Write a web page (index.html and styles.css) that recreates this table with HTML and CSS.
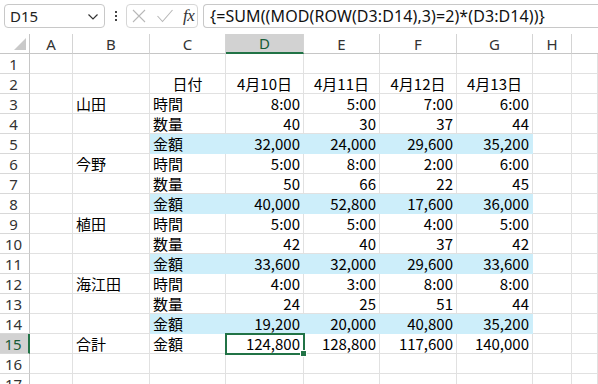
FILE: index.html
```html
<!DOCTYPE html>
<html lang="ja">
<head>
<meta charset="utf-8">
<link rel="stylesheet" href="styles.css">
</head>
<body>
<div class="fbar">
  <div class="namebox"><span>D15</span>
    <svg class="chev" width="12" height="8" viewBox="0 0 12 8"><path d="M1.5 1.5 L6 6 L10.5 1.5" fill="none" stroke="#333" stroke-width="1.2"/></svg>
  </div>
  <div class="dots"><i></i><i></i><i></i></div>
  <div class="fxbox">
    <svg width="16" height="16" viewBox="0 0 16 16"><path d="M2 2 L14 14 M14 2 L2 14" stroke="#b8b8b8" stroke-width="1.1" fill="none"/></svg>
    <svg width="18" height="16" viewBox="0 0 18 16"><path d="M1.5 8 L6.5 13.5 L16.5 2" stroke="#b8b8b8" stroke-width="1.1" fill="none"/></svg>
    <span class="fx">fx</span>
  </div>
  <div class="formula">{=SUM((MOD(ROW(D3:D14),3)=2)*(D3:D14))}</div>
</div>
<div class="sheet">
  <div class="corner"><span class="tri"></span></div>
  <div class="ch">A</div><div class="ch">B</div><div class="ch">C</div><div class="ch sel">D</div><div class="ch">E</div><div class="ch">F</div><div class="ch">G</div><div class="ch">H</div><div class="ch last"></div>

  <div class="rh">1</div><div class="c"></div><div class="c"></div><div class="c"></div><div class="c"></div><div class="c"></div><div class="c"></div><div class="c"></div><div class="c"></div><div class="c"></div>

  <div class="rh">2</div><div class="c"></div><div class="c"></div><div class="c ctr">日付</div><div class="c ctr">4月10日</div><div class="c ctr">4月11日</div><div class="c ctr">4月12日</div><div class="c ctr">4月13日</div><div class="c"></div><div class="c"></div>

  <div class="rh">3</div><div class="c"></div><div class="c">山田</div><div class="c">時間</div><div class="c r">8:00</div><div class="c r">5:00</div><div class="c r">7:00</div><div class="c r">6:00</div><div class="c"></div><div class="c"></div>
  <div class="rh">4</div><div class="c"></div><div class="c"></div><div class="c">数量</div><div class="c r">40</div><div class="c r">30</div><div class="c r">37</div><div class="c r">44</div><div class="c"></div><div class="c"></div>
  <div class="rh">5</div><div class="c"></div><div class="c"></div><div class="c b">金額</div><div class="c r b">32,000</div><div class="c r b">24,000</div><div class="c r b">29,600</div><div class="c r b">35,200</div><div class="c"></div><div class="c"></div>

  <div class="rh">6</div><div class="c"></div><div class="c">今野</div><div class="c">時間</div><div class="c r">5:00</div><div class="c r">8:00</div><div class="c r">2:00</div><div class="c r">6:00</div><div class="c"></div><div class="c"></div>
  <div class="rh">7</div><div class="c"></div><div class="c"></div><div class="c">数量</div><div class="c r">50</div><div class="c r">66</div><div class="c r">22</div><div class="c r">45</div><div class="c"></div><div class="c"></div>
  <div class="rh">8</div><div class="c"></div><div class="c"></div><div class="c b">金額</div><div class="c r b">40,000</div><div class="c r b">52,800</div><div class="c r b">17,600</div><div class="c r b">36,000</div><div class="c"></div><div class="c"></div>

  <div class="rh">9</div><div class="c"></div><div class="c">植田</div><div class="c">時間</div><div class="c r">5:00</div><div class="c r">5:00</div><div class="c r">4:00</div><div class="c r">5:00</div><div class="c"></div><div class="c"></div>
  <div class="rh">10</div><div class="c"></div><div class="c"></div><div class="c">数量</div><div class="c r">42</div><div class="c r">40</div><div class="c r">37</div><div class="c r">42</div><div class="c"></div><div class="c"></div>
  <div class="rh">11</div><div class="c"></div><div class="c"></div><div class="c b">金額</div><div class="c r b">33,600</div><div class="c r b">32,000</div><div class="c r b">29,600</div><div class="c r b">33,600</div><div class="c"></div><div class="c"></div>

  <div class="rh">12</div><div class="c"></div><div class="c">海江田</div><div class="c">時間</div><div class="c r">4:00</div><div class="c r">3:00</div><div class="c r">8:00</div><div class="c r">8:00</div><div class="c"></div><div class="c"></div>
  <div class="rh">13</div><div class="c"></div><div class="c"></div><div class="c">数量</div><div class="c r">24</div><div class="c r">25</div><div class="c r">51</div><div class="c r">44</div><div class="c"></div><div class="c"></div>
  <div class="rh">14</div><div class="c"></div><div class="c"></div><div class="c b">金額</div><div class="c r b">19,200</div><div class="c r b">20,000</div><div class="c r b">40,800</div><div class="c r b">35,200</div><div class="c"></div><div class="c"></div>

  <div class="rh selr">15</div><div class="c"></div><div class="c">合計</div><div class="c">金額</div><div class="c r active">124,800<span class="handle"></span></div><div class="c r">128,800</div><div class="c r">117,600</div><div class="c r">140,000</div><div class="c"></div><div class="c"></div>

  <div class="rh">16</div><div class="c"></div><div class="c"></div><div class="c"></div><div class="c"></div><div class="c"></div><div class="c"></div><div class="c"></div><div class="c"></div><div class="c"></div>
  <div class="rh">17</div><div class="c"></div><div class="c"></div><div class="c"></div><div class="c"></div><div class="c"></div><div class="c"></div><div class="c"></div><div class="c"></div><div class="c"></div>
</div>
</body>
</html>
```

FILE: styles.css
```css
html, body {
  margin: 0;
  padding: 0;
  background: #fff;
  overflow: hidden;
  width: 598px;
  height: 384px;
}
body {
  font-family: "Noto Sans CJK JP", sans-serif;
  color: #000;
}
.fbar {
  height: 34px;
  box-sizing: border-box;
  display: flex;
  align-items: flex-start;
  padding-top: 4px;
  padding-left: 4px;
  background: #fff;
  overflow: hidden;
}
.namebox {
  width: 101px;
  height: 24px;
  box-sizing: border-box;
  border: 1px solid #c8c8c8;
  border-radius: 4px;
  display: flex;
  align-items: center;
  justify-content: space-between;
  padding: 0 5px 0 5px;
  font-family: "Noto Sans", "Open Sans", sans-serif;
  font-size: 15px;
  color: #222;
}
.chev { margin-top: 1px; }
.dots {
  width: 21px;
  display: flex;
  flex-direction: column;
  align-items: center;
  gap: 2px;
  padding-top: 7px;
}
.dots i {
  display: block;
  width: 2px;
  height: 2px;
  background: #444;
}
.fxbox {
  width: 72px;
  height: 24px;
  box-sizing: border-box;
  border: 1px solid #d6d6d6;
  border-radius: 4px;
  display: flex;
  align-items: center;
  gap: 9px;
  padding-left: 4px;
}
.fx {
  font-family: "Liberation Serif", serif;
  font-style: italic;
  font-size: 17px;
  color: #333;
  margin-left: 0;
  letter-spacing: -0.5px;
}
.formula {
  margin-left: 5px;
  flex: 1 0 auto;
  height: 24px;
  box-sizing: border-box;
  border: 1px solid #c8c8c8;
  border-right: none;
  border-radius: 4px 0 0 4px;
  padding-left: 6px;
  font-family: "Noto Sans", "Open Sans", sans-serif;
  font-size: 16px;
  letter-spacing: 0.1px;
  line-height: 22px;
  color: #111;
  white-space: nowrap;
}
.sheet {
  display: grid;
  grid-template-columns: 30px 43px 77px 76px 78px 76px 77px 76px 39px 26px;
  grid-template-rows: 20px;
  grid-auto-rows: 20px;
}
.corner, .ch, .rh {
  box-sizing: border-box;
  background: #fff;
  color: #333;
  font-family: "Noto Sans", "Open Sans", sans-serif;
  font-size: 15px;
  display: flex;
  align-items: center;
  justify-content: center;
}
.corner {
  position: relative;
  border-right: 1px solid #c6c6c6;
  border-bottom: 1px solid #c6c6c6;
}
.tri {
  position: absolute;
  right: 3px;
  bottom: 3px;
  width: 0;
  height: 0;
  border-left: 12px solid transparent;
  border-bottom: 12px solid #c9c9c9;
}
.ch {
  border-right: 1px solid #d4d4d4;
  border-bottom: 1px solid #c6c6c6;
}
.ch.sel {
  background: #d2d2d2;
  color: #185c37;
  border-bottom: 2px solid #217346;
}
.ch.last { border-right: none; }
.rh {
  border-right: 1px solid #c6c6c6;
  border-bottom: 1px solid #d8d8d8;
  padding-right: 2px;
}
.rh.selr {
  background: #d2d2d2;
  color: #185c37;
  border-right: 2px solid #217346;
}
.c {
  box-sizing: border-box;
  border-right: 1px solid #e1e1e1;
  border-bottom: 1px solid #e1e1e1;
  font-size: 15px;
  display: flex;
  align-items: center;
  padding: 0 3px;
  white-space: nowrap;
  overflow: visible;
}
.c.r { justify-content: flex-end; }
.c.ctr { justify-content: center; }
.c.b {
  background: #cdeefa;
  border-right-color: #cdeefa;
  border-bottom-color: #cdeefa;
}
.c.active {
  position: relative;
  outline: 2px solid #217346;
  outline-offset: -1px;
  z-index: 1;
}
.handle {
  position: absolute;
  right: -4px;
  bottom: -4px;
  width: 5px;
  height: 5px;
  background: #217346;
  border: 1px solid #fff;
}
```
